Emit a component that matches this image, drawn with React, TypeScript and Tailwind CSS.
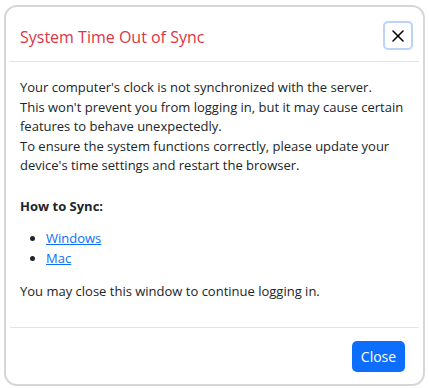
import { X } from 'lucide-react';

export default function App() {
  return (
    <div className="w-[429px] h-[388px] bg-white pl-[4px] pr-[4px] pt-[5px] pb-[2px] text-[#212529]" style={{ fontFamily: '"Open Sans", "Noto Sans", sans-serif' }}>
      <div className="h-full border-2 border-[#d6d6d6] rounded-[13px] px-[4px] flex flex-col">
        {/* Header */}
        <div className="h-[55px] shrink-0 border-b border-[#e3e3e3] flex items-center justify-between pl-[10px] pr-[6px] pt-[5px]">
          <h5 className="text-[16px] font-medium text-[#dc3545] leading-none">System Time Out of Sync</h5>
          <button className="w-[30px] h-[29px] -mt-[2px] rounded-[5px] border-2 border-[#b9d3fb] flex items-center justify-center">
            <X size={20} strokeWidth={1.8} className="text-black" />
          </button>
        </div>

        {/* Body */}
        <div className="flex-1 px-[10px] pt-[16px] text-[13px] leading-[19.5px]">
          <p>
            Your computer's clock is not synchronized with the server.
            <br />
            This won't prevent you from logging in, but it may cause certain features to behave unexpectedly.
            <br />
            To ensure the system functions correctly, please update your device's time settings and restart the browser.
          </p>
          <p className="mt-[21px] font-bold">How to Sync:</p>
          <ul className="mt-[13px] list-disc pl-[26px]">
            <li>
              <a href="#" className="text-[#0d6efd] underline">Windows</a>
            </li>
            <li>
              <a href="#" className="text-[#0d6efd] underline">Mac</a>
            </li>
          </ul>
          <p className="mt-[14px]">You may close this window to continue logging in.</p>
        </div>

        {/* Footer */}
        <div className="h-[57px] shrink-0 border-t border-[#e3e3e3] flex items-start justify-end pt-[13px] pr-[14px]">
          <button className="w-[53px] h-[31px] rounded-[5px] bg-[#0d6efd] text-white text-[14px]">Close</button>
        </div>
      </div>
    </div>
  );
}
